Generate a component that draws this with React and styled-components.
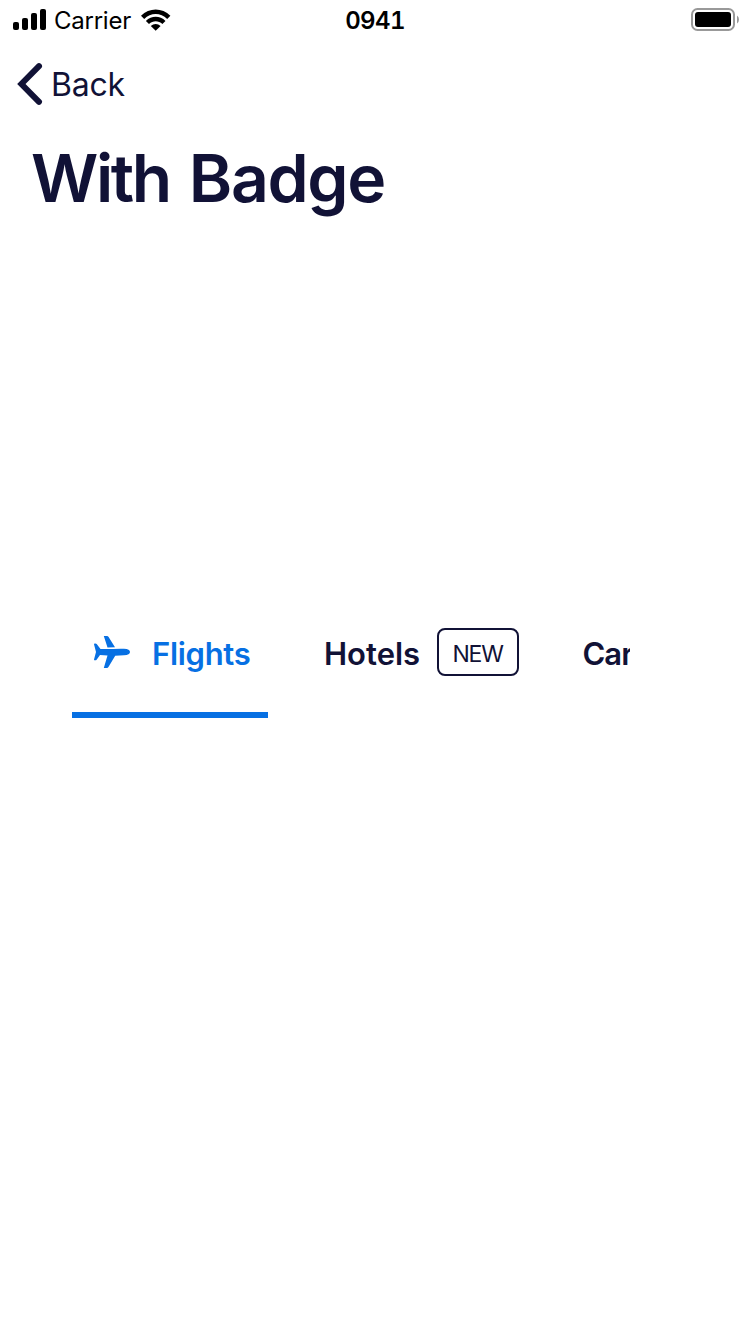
import React from "react";
import styled, { createGlobalStyle } from "styled-components";

const navy = "#111236";
const blue = "#0770e3";

const GlobalStyle = createGlobalStyle`
  * { box-sizing: border-box; }
  body { margin: 0; background: #fff; }
`;

const Screen = styled.main`
  display: flex;
  flex-direction: column;
  width: 750px;
  height: 1334px;
  overflow: hidden;
  background: #fff;
  color: ${navy};
  font-family: Inter, "Liberation Sans", sans-serif;
  white-space: nowrap;
`;

const StatusBar = styled.header`
  display: grid;
  grid-template-columns: 1fr auto 1fr;
  align-items: center;
  height: 40px;
  padding: 0 10px 0 13px;
  color: #000;
`;

const StatusGroup = styled.div`
  display: flex;
  align-items: center;
  justify-content: ${(p) => (p.$end ? "flex-end" : "flex-start")};
`;

const Carrier = styled.span`
  width: 79px;
  margin: 1px 8px 0 7px;
  font-size: 24px;
  line-height: 30px;
  letter-spacing: -0.25px;
`;

const Clock = styled.time`
  padding: 2px 3px 0 0;
  font-size: 24px;
  font-weight: 600;
  line-height: 30px;
  letter-spacing: -0.6px;
  font-variant-numeric: tabular-nums;
`;

const NavBar = styled.nav`
  display: flex;
  align-items: center;
  height: 88px;
  padding-left: 17px;
`;

const BackButton = styled.button`
  display: flex;
  align-items: center;
  gap: 8px;
  padding: 0;
  border: 0;
  background: none;
  color: inherit;
`;

const BackLabel = styled.span`
  padding-top: 2px;
  font: 400 32px/40px Inter, "Liberation Sans", sans-serif;
  letter-spacing: -0.2px;
`;

const Title = styled.h1`
  margin: 10px 0 0 31px;
  font-size: 66px;
  font-weight: 600;
  line-height: 80px;
  letter-spacing: -1.3px;
  word-spacing: 3.5px;
`;

const TightWord = styled.span`
  letter-spacing: -2.4px;
`;

const TabList = styled.div`
  display: flex;
  width: 558px;
  height: 128px;
  margin: 372px 0 0 72px;
  overflow: hidden;
`;

const Tab = styled.button`
  display: flex;
  flex: none;
  align-items: center;
  width: ${(p) => p.$width}px;
  margin: 0;
  padding: 0 0 0 ${(p) => p.$inset}px;
  border: 0;
  border-bottom: 6px solid ${(p) => (p.$active ? blue : "transparent")};
  background: none;
  color: ${(p) => (p.$active ? blue : navy)};
`;

const TabLabel = styled.span`
  flex: none;
  width: ${(p) => p.$width}px;
  padding-top: 6px;
  text-align: left;
  font: 600 31px/40px Inter, "Liberation Sans", sans-serif;
  letter-spacing: ${(p) => p.$tracking}px;
`;

const Badge = styled.span`
  display: flex;
  align-items: center;
  justify-content: center;
  width: 82px;
  height: 48px;
  margin: 2px 0 0 16px;
  padding: 4px 1px 0 0;
  border: 2px solid ${navy};
  border-radius: 8px;
  font: 400 23px/30px Inter, "Liberation Sans", sans-serif;
  letter-spacing: -1.2px;
`;

const Plane = styled.svg`
  flex: none;
  margin: 1px 22px 0 0;
`;

export default function App() {
  return (
    <Screen>
      <GlobalStyle />
      <StatusBar>
        <StatusGroup>
          <svg width="34" height="22" viewBox="0 0 34 22">
            <rect x="0" y="13" width="6" height="8" rx="2" />
            <rect x="9" y="9" width="6" height="12" rx="2" />
            <rect x="18" y="4" width="6" height="17" rx="2" />
            <rect x="27" y="0" width="6" height="21" rx="2" />
          </svg>
          <Carrier>Carrier</Carrier>
          <svg width="30" height="22" viewBox="0 0 30 22">
            <path d="M0 6.8C8.3-1.6 21.1-1.6 29.4 6.8L26.2 9.9C19.6 3.3 9.8 3.3 3.2 9.9Z" />
            <path d="M4.9 11.9C10.5 6.4 18.9 6.4 24.5 11.9L21.4 14.9C17.5 11.2 11.9 11.2 8 14.9Z" />
            <path d="M9.8 17C12.7 14.3 16.7 14.3 19.6 17L14.7 21.7Z" />
          </svg>
        </StatusGroup>
        <Clock>0941</Clock>
        <StatusGroup $end>
          <svg width="49" height="24" viewBox="0 0 49 24">
            <rect x="1" y="1" width="42" height="21" rx="5.5" fill="none" stroke="#999" strokeWidth="2" />
            <rect x="4" y="4" width="36" height="15" rx="3" />
            <path d="M46 7.5Q48 9 48 11.5T46 15.5Z" fill="#999" />
          </svg>
        </StatusGroup>
      </StatusBar>
      <NavBar>
        <BackButton>
          <svg width="26" height="42" viewBox="0 0 26 42">
            <path d="M22 3.2L4.4 21L22 38.8" fill="none" stroke={navy} strokeWidth="6" strokeLinecap="round" strokeLinejoin="miter" />
          </svg>
          <BackLabel>Back</BackLabel>
        </BackButton>
      </NavBar>
      <Title>
        <TightWord>With</TightWord> Badge
      </Title>
      <TabList role="tablist">
        <Tab $active $width={196} $inset={22}>
          <Plane width="36" height="32" viewBox="0 0 36 32">
            <path
              fill={blue}
              d="M9.8 0H13Q14 0 14.6 1L21 11.3L13.5 11.6Z M0 8.2Q0 7.4 0.8 7.4H1.4Q2.2 7.4 2.7 8L6.5 12.9C14 13.4 22 12.4 30 12.7C34 12.9 36 14.3 36 16S34 19.1 30 19.3L21.2 19.8L14.6 30.8Q13.9 32 12.8 32H9.8L13.5 19.6L6 19.1L2.6 23.7Q2.1 24.3 1.4 24.3H0.8Q0 24.3 0 23.4L2 16Z"
            />
          </Plane>
          <TabLabel $width={102} $tracking={-0.3}>Flights</TabLabel>
        </Tab>
        <Tab $width={269} $inset={56}>
          <TabLabel $width={97} $tracking={0}>Hotels</TabLabel>
          <Badge>NEW</Badge>
        </Tab>
        <Tab $width={160} $inset={45.5}>
          <TabLabel $width={80} $tracking={-1}>Cars</TabLabel>
        </Tab>
      </TabList>
    </Screen>
  );
}
